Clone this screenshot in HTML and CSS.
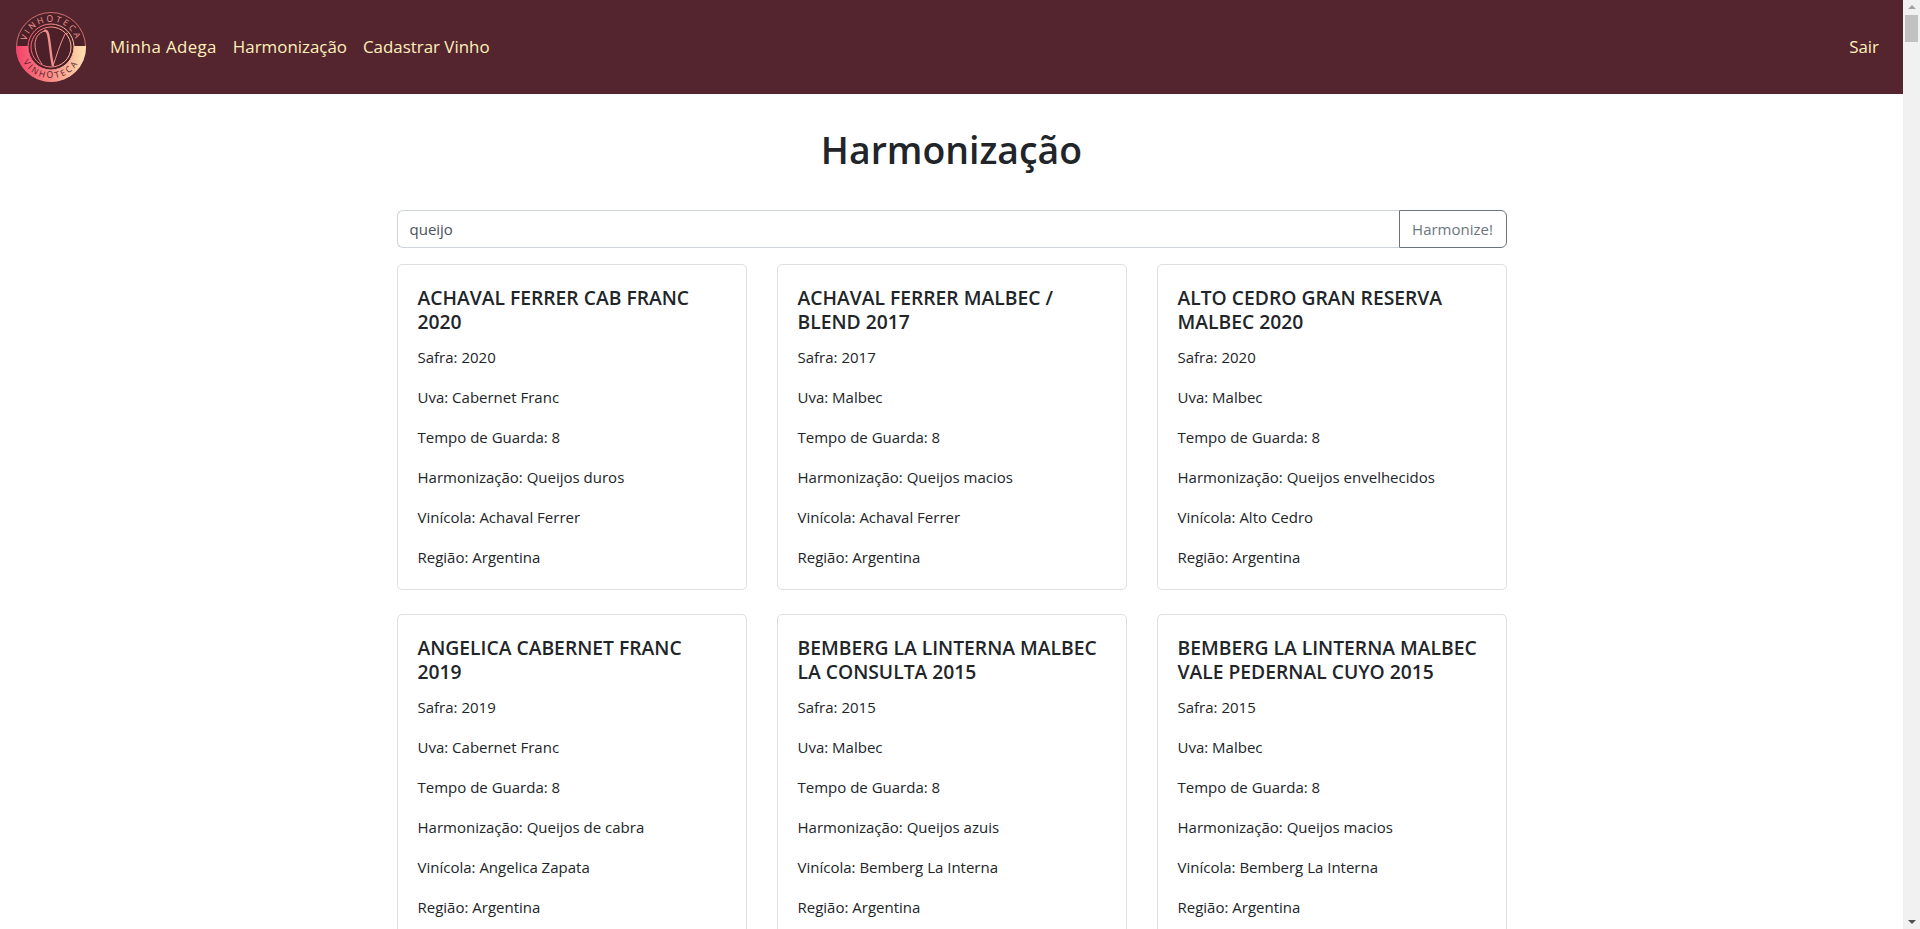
FILE: index.html
```html
<!DOCTYPE html>
<html lang="pt-BR">
<head>
<meta charset="utf-8">
<title>Harmonização</title>
<link rel="stylesheet" href="styles.css">
</head>
<body>
<div class="viewport">
  <div class="page">
    <nav class="navbar">
      <a class="brand" href="#" aria-label="Vinhoteca">
        <svg class="logo" viewBox="0 0 70 70" xmlns="http://www.w3.org/2000/svg">
          <defs>
            <linearGradient id="band" gradientUnits="userSpaceOnUse" x1="0" x2="70" y1="0" y2="0">
              <stop offset="0" stop-color="#f4416a"/>
              <stop offset="0.5" stop-color="#f98c86"/>
              <stop offset="1" stop-color="#fde3b0"/>
            </linearGradient>
            <clipPath id="lower"><rect x="0" y="34" width="70" height="36"/></clipPath>
            <path id="arcTop" d="M9.500 35a25.500 25.500 0 0 1 51 0"/>
            <path id="arcBottom" d="M3.500 35a31.500 31.500 0 0 0 63 0"/>
          </defs>
          <circle cx="35" cy="35" r="34.500" fill="#4c2029" stroke="#c9726f" stroke-width="1"/>
          <circle cx="35" cy="35" r="35" fill="url(#band)" clip-path="url(#lower)"/>
          <circle cx="35" cy="35" r="23" fill="#4c2029" stroke="url(#band)" stroke-width="1"/>
          <circle cx="35" cy="35" r="20" fill="none" stroke="url(#band)" stroke-width="1"/>
          <text class="logo-text logo-text-top"><textPath href="#arcTop" startOffset="50%" text-anchor="middle">VINHOTECA</textPath></text>
          <text class="logo-text logo-text-bottom"><textPath href="#arcBottom" startOffset="50%" text-anchor="middle">VINHOTECA</textPath></text>
          <path d="M29 19c-6 1-10 7-10 13 0 9 4 16 7 20" fill="none" stroke="#f08f8b" stroke-width="1"/>
          <path d="M28 19c2-1 3 0 4 3 2 7 2 18 5 32" fill="none" stroke="#f08f8b" stroke-width="2.400"/>
          <path d="M37 54c3-9 7-22 12-32 1-1 2-1 3 0" fill="none" stroke="#f08f8b" stroke-width="1"/>
        </svg>
      </a>
      <a class="nav-link nav-link-wide" href="#">Minha Adega</a>
      <a class="nav-link" href="#">Harmonização</a>
      <a class="nav-link" href="#">Cadastrar Vinho</a>
      <a class="nav-link nav-end" href="#">Sair</a>
    </nav>
    <main class="container">
      <h1 class="title">Harmonização</h1>
      <form class="search">
        <input class="search-input" type="text" value="queijo" aria-label="Harmonização">
        <button class="search-btn" type="button">Harmonize!</button>
      </form>
      <section class="cards">
        <article class="card">
          <h5>ACHAVAL FERRER CAB FRANC 2020</h5>
          <p>Safra: 2020</p><p>Uva: Cabernet Franc</p><p>Tempo de Guarda: 8</p><p>Harmonização: Queijos duros</p><p>Vinícola: Achaval Ferrer</p><p>Região: Argentina</p>
        </article>
        <article class="card">
          <h5>ACHAVAL FERRER MALBEC / BLEND 2017</h5>
          <p>Safra: 2017</p><p>Uva: Malbec</p><p>Tempo de Guarda: 8</p><p>Harmonização: Queijos macios</p><p>Vinícola: Achaval Ferrer</p><p>Região: Argentina</p>
        </article>
        <article class="card">
          <h5>ALTO CEDRO GRAN RESERVA MALBEC 2020</h5>
          <p>Safra: 2020</p><p>Uva: Malbec</p><p>Tempo de Guarda: 8</p><p>Harmonização: Queijos envelhecidos</p><p>Vinícola: Alto Cedro</p><p>Região: Argentina</p>
        </article>
        <article class="card">
          <h5>ANGELICA CABERNET FRANC 2019</h5>
          <p>Safra: 2019</p><p>Uva: Cabernet Franc</p><p>Tempo de Guarda: 8</p><p>Harmonização: Queijos de cabra</p><p>Vinícola: Angelica Zapata</p><p>Região: Argentina</p>
        </article>
        <article class="card">
          <h5>BEMBERG LA LINTERNA MALBEC LA CONSULTA 2015</h5>
          <p>Safra: 2015</p><p>Uva: Malbec</p><p>Tempo de Guarda: 8</p><p>Harmonização: Queijos azuis</p><p>Vinícola: Bemberg La Interna</p><p>Região: Argentina</p>
        </article>
        <article class="card">
          <h5>BEMBERG LA LINTERNA MALBEC VALE PEDERNAL CUYO 2015</h5>
          <p>Safra: 2015</p><p>Uva: Malbec</p><p>Tempo de Guarda: 8</p><p>Harmonização: Queijos macios</p><p>Vinícola: Bemberg La Interna</p><p>Região: Argentina</p>
        </article>
      </section>
    </main>
  </div>
  <div class="scrollbar" aria-hidden="true">
    <span class="arrow arrow-up"></span>
    <span class="thumb"></span>
    <span class="arrow arrow-down"></span>
  </div>
</div>
</body>
</html>
```
FILE: styles.css
```css
* { box-sizing: border-box; }
html, body { margin: 0; height: 100%; overflow: hidden; }
body {
  font-family: "Open Sans", "Noto Sans", sans-serif;
  font-size: 15px;
  line-height: 24px;
  color: #212529;
  background: #fff;
}
.viewport { display: flex; height: 929px; }
.page { flex: 1; min-width: 0; overflow: hidden; }

.navbar {
  display: flex;
  align-items: center;
  height: 94px;
  padding: 0 16px;
  background: #55252f;
}
.brand { display: block; width: 70px; height: 70px; margin-right: 16px; }
.logo { display: block; width: 70px; height: 70px; }
.logo-text { font-family: "Open Sans", sans-serif; font-size: 8.500px; letter-spacing: 2.300px; }
.logo-text-top { fill: #f29a92; }
.logo-text-bottom { fill: #4c2029; }
.nav-link { padding: 0 8px; font-size: 16.900px; color: #fdf1bb; text-decoration: none; }
.nav-link-wide { letter-spacing: 0.350px; }
.nav-end { margin-left: auto; }

.container { width: 1110px; margin: 0 auto; }
.title {
  margin: 32px 0 36px;
  font-size: 37.400px;
  line-height: 48px;
  font-weight: 600;
  text-align: center;
}
.search { display: flex; height: 38px; margin-bottom: 16px; }
.search-input {
  flex: 1;
  min-width: 0;
  padding: 6px 12px;
  border: 1px solid #ced4da;
  border-right: 0;
  border-radius: 6px 0 0 6px;
  font: inherit;
  color: #495057;
  outline: 0;
}
.search-btn {
  width: 108px;
  padding: 0;
  border: 1px solid #6c757d;
  border-radius: 0 6px 6px 0;
  background: #fff;
  font: inherit;
  color: #6c757d;
}
.cards { display: grid; grid-template-columns: repeat(3, 350px); column-gap: 30px; row-gap: 24px; }
.card { padding: 20px; border: 1px solid #dfdfdf; border-radius: 5px; background: #fff; }
.card h5 { margin: 0 0 11px; padding-top: 1px; font-size: 19.300px; line-height: 24px; font-weight: 600; }
.card p { margin: 0 0 16px; }
.card p:last-child { margin-bottom: 0; }

.scrollbar { display: flex; flex-direction: column; align-items: center; width: 17px; height: 929px; background: #f1f1f1; }
.thumb { width: 13px; height: 27px; margin-top: 1px; background: #c1c1c1; }
.arrow { width: 0; height: 0; border-left: 4px solid transparent; border-right: 4px solid transparent; }
.arrow-up { margin-top: 5px; margin-bottom: 5px; border-bottom: 4px solid #a3a3a3; }
.arrow-down { margin-top: auto; margin-bottom: 5px; border-top: 4px solid #505050; }
```
